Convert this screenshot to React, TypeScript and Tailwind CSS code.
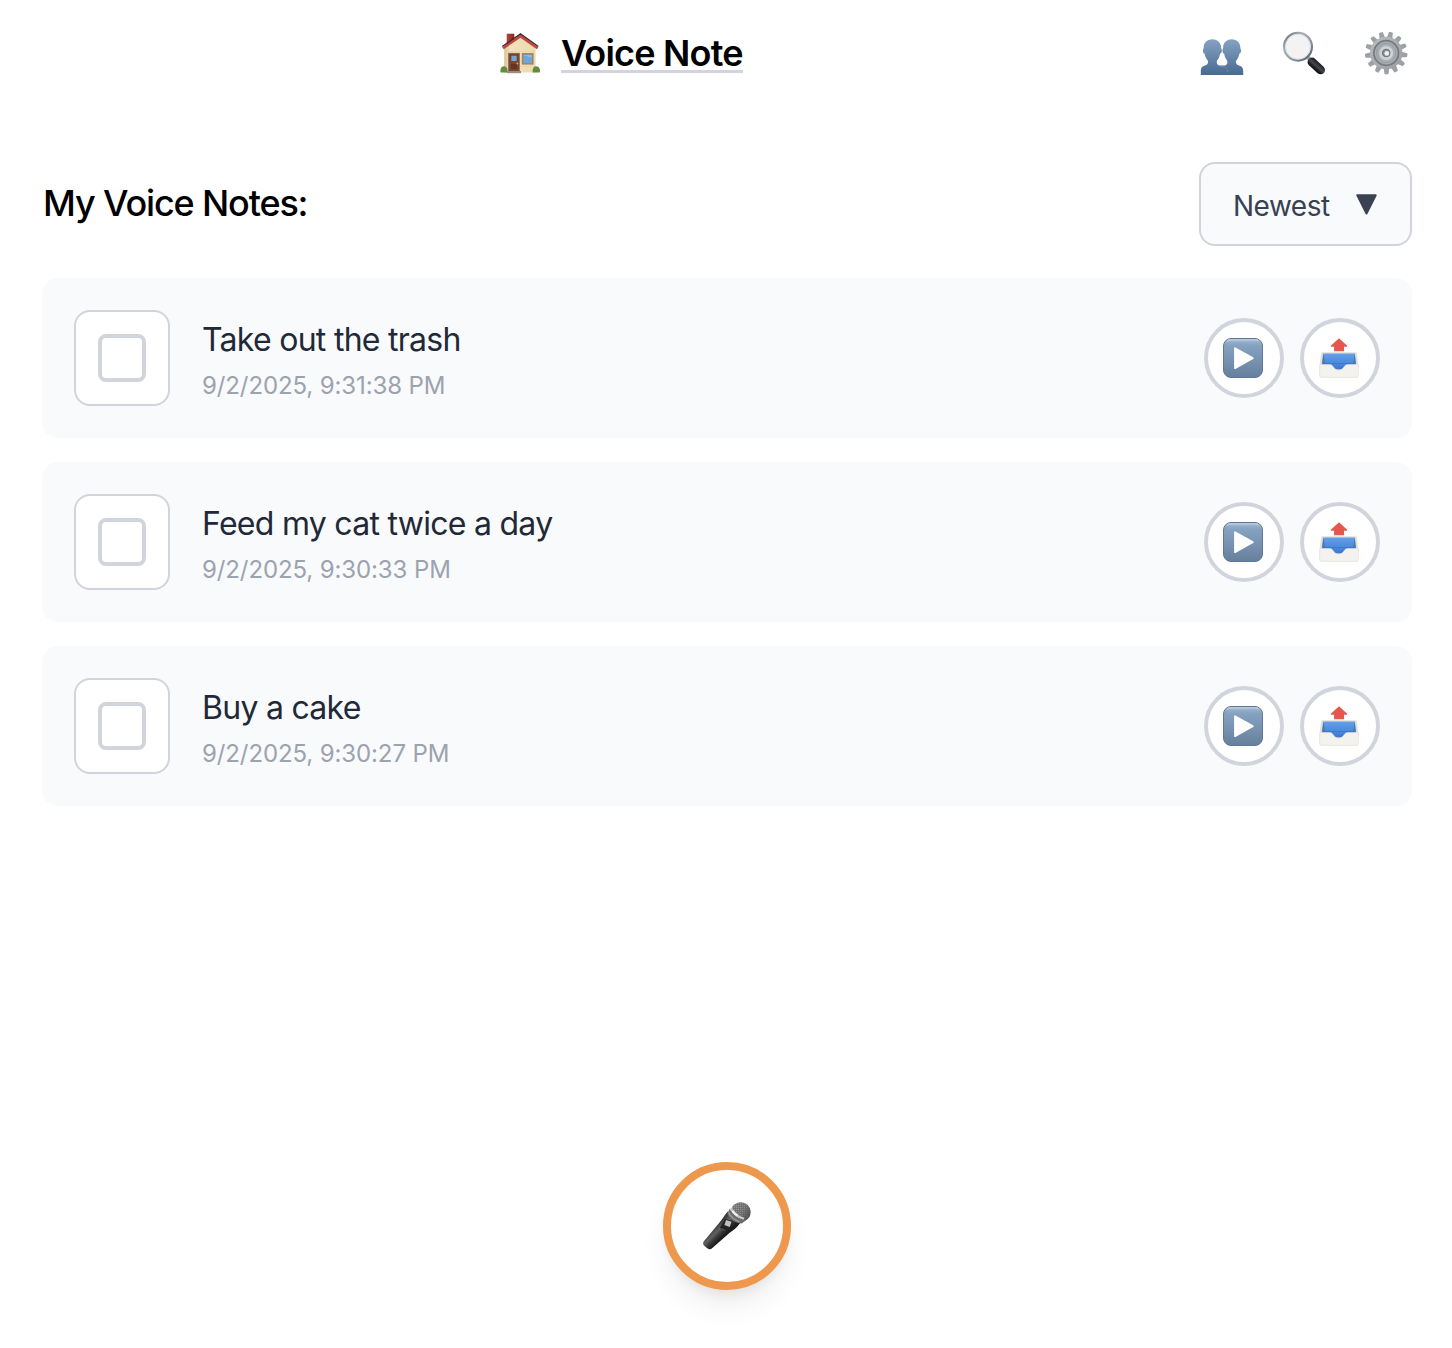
const notes = [
  { title: 'Take out the trash', date: '9/2/2025, 9:31:38 PM' },
  { title: 'Feed my cat twice a day', date: '9/2/2025, 9:30:33 PM' },
  { title: 'Buy a cake', date: '9/2/2025, 9:30:27 PM' },
];

function HouseIcon() {
  return (
    <svg width="44" height="44" viewBox="0 0 44 44">
      <defs>
        <linearGradient id="wall" x1="0" y1="0" x2="1" y2="0">
          <stop offset="0" stopColor="#d9c296" />
          <stop offset="0.2" stopColor="#f2e2bd" />
          <stop offset="1" stopColor="#ecd9b0" />
        </linearGradient>
        <linearGradient id="brick" x1="0" y1="0" x2="1" y2="0">
          <stop offset="0" stopColor="#b5483c" />
          <stop offset="1" stopColor="#7e2a22" />
        </linearGradient>
      </defs>
      <rect x="8.7" y="2.7" width="7.6" height="12" fill="url(#brick)" />
      <path d="M6.2 17 22.5 5.5 37.6 17V41.6H6.2Z" fill="url(#wall)" />
      <path d="M7 20.500h30M7 25.500h3M7 30.500h30M7 35.500h30" stroke="#e2d0a6" strokeWidth="0.500" />
      <path d="M5 17.200 22.500 5.200 39.600 17.200" fill="none" stroke="#c5463b" strokeWidth="2.600" />
      <path d="M4.200 15.500 22.500 2.900 40.300 15.500" fill="none" stroke="#3c2b30" strokeWidth="1.300" />
      <rect x="10.700" y="22.300" width="10.600" height="18" fill="#7a452f" stroke="#8c5a3c" strokeWidth="0.800" />
      <rect x="13" y="24.300" width="6" height="6" fill="#74a6d4" stroke="#5d3524" strokeWidth="0.500" />
      <rect x="13" y="33" width="6" height="5" fill="#643626" />
      <circle cx="19.400" cy="32.500" r="0.900" fill="#e0b04a" />
      <rect x="24.600" y="22.800" width="10.200" height="10" fill="#6fa5d8" stroke="#a3865c" strokeWidth="1.600" />
      <path d="M25.500 24h8v3z" fill="#8dbae4" />
      <path d="M2.700 41.500c-1-3.800 1-6.500 3.600-6.200 2.400.2 3.600 2.500 3.200 6.200z" fill="#648c3d" />
      <path d="M34.700 41.500c-.4-3.500.7-6 3.300-6.200 3 .1 4.600 2.700 3.700 6.200z" fill="#648c3d" />
      <rect x="9" y="40" width="14" height="2.200" fill="#9a8c82" />
    </svg>
  );
}

function PeopleIcon() {
  return (
    <svg width="44" height="44" viewBox="0 0 44 44">
      <defs>
        <linearGradient id="bust" x1="0" y1="0" x2="0" y2="1">
          <stop offset="0" stopColor="#86a2c3" />
          <stop offset="1" stopColor="#486a91" />
        </linearGradient>
      </defs>
      <path
        d="M12.300 8.300C6.800 8.300 3.600 12 3.600 17c0 1-.8 1.200-.7 2.500.1 1.600.8 3 1.800 3.300.6 3.700 2 5.400 3.100 6.800.8 3.200-.6 4.300-3.500 5.200C1.600 35.700.8 37.500.8 40v4h42.400v-4c0-2.500-.7-4.300-3.500-5.200-2.800-.9-4.300-2-3.500-5.200 1.200-1.400 2.500-3.100 3.100-6.800 1.100-.3 1.700-1.700 1.800-3.300.1-1.300-.7-1.500-.7-2.500 0-5-3.200-8.700-8.700-8.700s-8.600 3.700-8.600 8.700c0 1-.8 1.200-.7 2.500.1 1.600.7 3 1.800 3.300.5 3.700 1.900 5.400 3 6.800.7 2.700-.1 4-2.200 4.900h-5.800c-2.200-.9-2.900-2.200-2.200-4.900 1.200-1.400 2.500-3.100 3-6.800 1.100-.3 1.800-1.700 1.900-3.300.1-1.300-.7-1.500-.7-2.500 0-5-3.300-8.700-8.900-8.700Z"
        fill="url(#bust)"
      />
      <path d="M20 35c5 .8 8 2 8 6" fill="none" stroke="#6f8db1" strokeWidth="0.900" />
    </svg>
  );
}

function SearchIcon() {
  return (
    <svg width="44" height="44" viewBox="0 0 44 44">
      <defs>
        <linearGradient id="rim" x1="0" y1="0" x2="1" y2="1">
          <stop offset="0" stopColor="#5d6267" />
          <stop offset="0.300" stopColor="#a8b0b6" />
          <stop offset="0.650" stopColor="#8697a4" />
          <stop offset="1" stopColor="#4d5359" />
        </linearGradient>
        <linearGradient id="grip" gradientUnits="userSpaceOnUse" x1="38" y1="31" x2="31" y2="39">
          <stop offset="0" stopColor="#111214" />
          <stop offset="0.500" stopColor="#45484c" />
          <stop offset="0.700" stopColor="#222326" />
          <stop offset="1" stopColor="#08090a" />
        </linearGradient>
      </defs>
      <path d="m25.500 26 4 4" stroke="#a4a9ad" strokeWidth="4" />
      <path d="m30 31 8.600 7.900" stroke="url(#grip)" strokeWidth="8.800" strokeLinecap="round" />
      <circle cx="16" cy="15.700" r="13.900" fill="#f3f3f4" stroke="url(#rim)" strokeWidth="2.200" />
      <circle cx="16" cy="15.700" r="12.400" fill="none" stroke="#dadde0" strokeWidth="0.900" />
    </svg>
  );
}

const teeth = [0, 1, 2, 3, 4, 5, 6, 7, 8, 9, 10, 11, 12];

function GearIcon() {
  return (
    <svg width="44" height="44" viewBox="0 0 44 44">
      <defs>
        <linearGradient id="metal" x1="0" y1="0" x2="1" y2="1">
          <stop offset="0" stopColor="#b9bcc0" />
          <stop offset="1" stopColor="#9a9ea3" />
        </linearGradient>
      </defs>
      {teeth.map((i) => (
        <path
          key={i}
          d="M19.300 8 20.200 1q2-.8 4 0L25.100 8Z"
          fill="#9da1a6"
          transform={`rotate(${i * 27.692 + 13} 22.200 22)`}
        />
      ))}
      <circle cx="22.200" cy="22" r="16.200" fill="url(#metal)" />
      <circle cx="22.200" cy="22" r="12.300" fill="#a9aeb2" stroke="#757a80" strokeWidth="1.700" />
      <circle cx="22.200" cy="22" r="9.700" fill="none" stroke="#92979c" strokeWidth="0.800" />
      <circle cx="22.200" cy="22" r="7.400" fill="#cfd2d5" stroke="#a0a5a9" strokeWidth="0.600" />
      <circle cx="22.200" cy="22" r="3.800" fill="#878c91" stroke="#6b7075" strokeWidth="1" />
      <circle cx="22.800" cy="22.400" r="2.400" fill="#eeeff0" />
    </svg>
  );
}

function PlayIcon() {
  return (
    <svg width="40" height="40" viewBox="0 0 40 40">
      <defs>
        <linearGradient id="play" x1="0" y1="0" x2="0" y2="1">
          <stop offset="0" stopColor="#a3bbd5" />
          <stop offset="0.180" stopColor="#86a2c1" />
          <stop offset="1" stopColor="#667f9d" />
        </linearGradient>
      </defs>
      <rect x="0.500" y="0.500" width="39" height="39" rx="7.500" fill="url(#play)" stroke="#5f7895" />
      <path d="M4 3Q5.500 2 8 2h24q2.500 0 4 1" fill="none" stroke="#b9cce0" strokeWidth="1.400" />
      <path d="M12 10.200v20L29.800 20.100Z" fill="#fff" stroke="#fff" strokeWidth="1.800" strokeLinejoin="round" />
    </svg>
  );
}

function OutboxIcon() {
  return (
    <svg width="40" height="40" viewBox="0 0 40 40">
      <defs>
        <linearGradient id="tray" x1="0" y1="0" x2="0" y2="1">
          <stop offset="0" stopColor="#64a0ea" />
          <stop offset="0.600" stopColor="#4686da" />
          <stop offset="1" stopColor="#2f6cc0" />
        </linearGradient>
      </defs>
      <path d="M3.200 14.300H36.800Q37.600 14.300 37.800 15L39.400 28H.6L2.200 15q.2-.7 1-.7Z" fill="#e2dfd9" />
      <path d="M4.200 15.500H35.800L37 27.500 30 34H10.500L3 27.500Z" fill="url(#tray)" />
      <path d="M4.200 15.500 6.500 25.500 3 27.500zM35.800 15.500 34 25.500 37 27.500z" fill="#4a79b8" />
      <path d="M6.500 25.500h28" stroke="#3a72bd" strokeWidth="0.700" />
      <path
        d="M.6 27.400q0-.9 1-.9h9c1.700 0 2.700.8 3.900 2.600 1.200 1.900 2.400 2.700 5.200 2.700s4-.8 5.200-2.700c1.200-1.800 2.200-2.600 3.900-2.600h9.600q1 0 1 .9v10q0 2-2 2H2.600q-2 0-2-2Z"
        fill="#f3f2ee"
        stroke="#dedcd6"
        strokeWidth="0.600"
      />
      <path d="M20 .3 28.200 7.800q.3.900-.5.900H25v4.600H15.100V8.700H12.300q-.8 0-.5-.9Z" fill="#e4574f" />
    </svg>
  );
}

function MicIcon() {
  return (
    <svg width="48" height="48" viewBox="0 0 48 48">
      <defs>
        <linearGradient id="mesh" x1="0.100" y1="0.200" x2="1" y2="0.700">
          <stop offset="0" stopColor="#9a9a9a" />
          <stop offset="0.550" stopColor="#868686" />
          <stop offset="1" stopColor="#4a4a4a" />
        </linearGradient>
        <pattern id="grid" width="2" height="2" patternUnits="userSpaceOnUse">
          <path d="M0 .5h2M.5 0v2" stroke="#555" strokeWidth="0.400" />
        </pattern>
        <linearGradient id="body" gradientUnits="userSpaceOnUse" x1="11" y1="26" x2="20" y2="35">
          <stop offset="0" stopColor="#3a3a3a" />
          <stop offset="0.350" stopColor="#626262" />
          <stop offset="0.700" stopColor="#343434" />
          <stop offset="1" stopColor="#1c1c1c" />
        </linearGradient>
      </defs>
      <path
        d="M24.800 9.500 37.500 20.500C35.500 24 31.500 27.500 27 30.500L9.300 46Q7 48.200 4.300 46.300L1.200 43.700Q-.8 41.800.9 39.300L16.500 20.500C20 16.500 22 12 24.800 9.500Z"
        fill="url(#body)"
      />
      <ellipse cx="37.700" cy="10" rx="10" ry="9.800" fill="url(#mesh)" />
      <ellipse cx="37.700" cy="10" rx="10" ry="9.800" fill="url(#grid)" />
      <path d="M26.800 6.500C29 12.500 35 17.300 42.500 18.500L38.800 21.500C31 21 25.500 16.500 24.300 11.500Z" fill="#6c6c6c" />
      <path d="M28 6.300C30 11 34.500 15 41 16.800" fill="none" stroke="#c9c9c9" strokeWidth="2.200" />
      <path d="M29.500 8.800q2 2.800 5 4.700" fill="none" stroke="#efefef" strokeWidth="2.200" />
      <path d="M25.700 10.600q3 6.400 10.700 9.200" fill="none" stroke="#a5a5a5" strokeWidth="1.200" />
      <path d="m22 16.800 7.800 2.500-1.800 6-5.500 4.200-5.500-3.700Z" fill="#242424" />
      <path d="m23 18 5.600 1.800-2 5.200-5.200-1.900Z" fill="#c4c0c0" />
      <path d="m18.700 26.700 3.600 1.800" stroke="#777" strokeWidth="0.700" />
    </svg>
  );
}

function NoteRow({ title, date }: { title: string; date: string }) {
  return (
    <li className="flex h-40 items-center rounded-2xl bg-[#f9fafc] px-8">
      <button className="flex size-24 shrink-0 items-center justify-center rounded-2xl border-2 border-[#d1d5db] bg-white">
        <span className="size-12 rounded-lg border-4 border-[#d1d5db]" />
      </button>
      <div className="ml-8 flex-1 pt-2">
        <p className="text-[32px] leading-[44px] tracking-[-0.72px] text-[#1f2937]">{title}</p>
        <p className="mt-1 text-2xl leading-[40px] tracking-[-0.11px] text-[#9ca3af]">{date}</p>
      </div>
      <div className="flex gap-4">
        <button className="flex size-20 items-center justify-center rounded-full border-4 border-[#d1d5db] bg-white pr-0.5">
          <PlayIcon />
        </button>
        <button className="flex size-20 items-center justify-center rounded-full border-4 border-[#d1d5db] bg-white pr-0.5">
          <OutboxIcon />
        </button>
      </div>
    </li>
  );
}

export default function App() {
  return (
    <div className="flex h-[1348px] flex-col bg-white font-['Inter',sans-serif]">
      <header className="flex h-[106px] items-center pr-[44px] pl-[498px]">
        <HouseIcon />
        <h1 className="ml-[19px] border-b-3 border-[#d1d5db] pt-1 text-4xl leading-[33px] font-semibold tracking-[-0.8px] whitespace-nowrap text-black">
          Voice Note
        </h1>
        <nav className="ml-auto flex gap-[38px]">
          <PeopleIcon />
          <SearchIcon />
          <GearIcon />
        </nav>
      </header>
      <main className="pt-14 pr-10 pl-[42px]">
        <div className="flex h-[84px] items-center justify-between">
          <h2 className="pb-0.5 pl-px text-4xl font-medium tracking-[-1.15px] text-black">My Voice Notes:</h2>
          <button className="flex h-[84px] w-[213px] items-center justify-between rounded-2xl border-2 border-[#d1d5db] bg-[#f9fafc] pr-[33px] pl-8 text-[28px] text-[#374151]">
            <span className="pt-1 tracking-[-0.5px]">Newest</span>
            <svg width="21" height="21" viewBox="0 0 21 21" fill="#3b4252" stroke="#3b4252" strokeWidth="2" strokeLinejoin="round">
              <path d="M1.300 1.200h18.400L10.500 19.500Z" />
            </svg>
          </button>
        </div>
        <ul className="mt-8 flex flex-col gap-6">
          {notes.map((note) => (
            <NoteRow key={note.date} title={note.title} date={note.date} />
          ))}
        </ul>
      </main>
      <footer className="mt-auto flex justify-center pb-[58px] pl-0.5">
        <button className="flex size-32 items-center justify-center rounded-full border-8 border-[#ee984d] bg-white shadow-[0_20px_30px_-6px_rgba(0,0,0,0.08),0_8px_12px_-4px_rgba(0,0,0,0.06)]">
          <MicIcon />
        </button>
      </footer>
    </div>
  );
}
